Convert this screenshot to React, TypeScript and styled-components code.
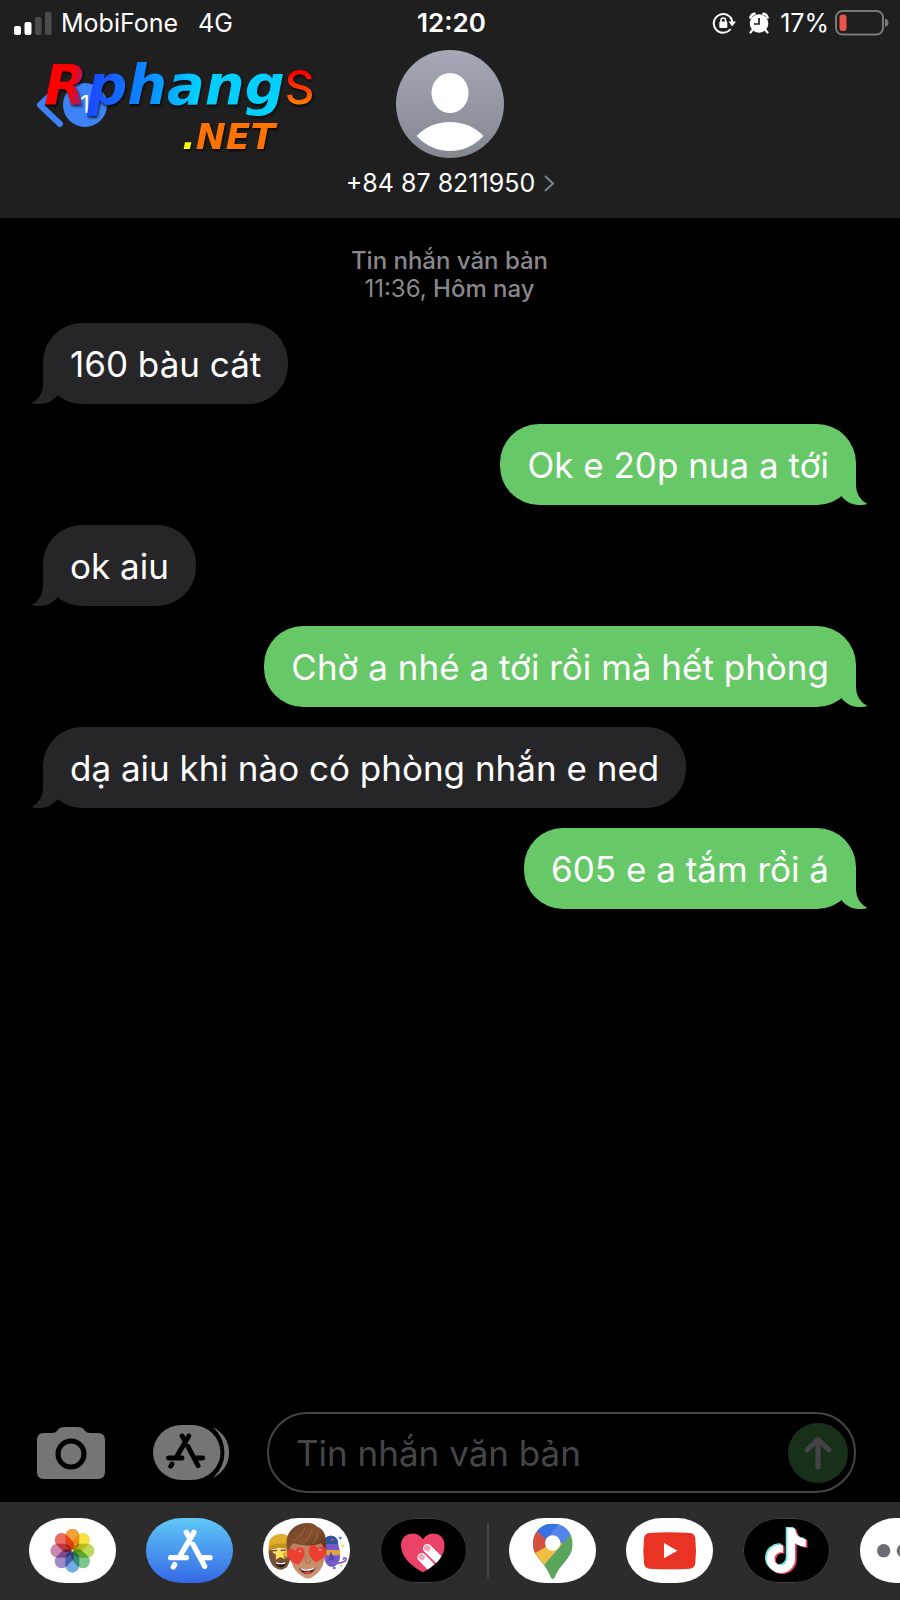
import React from "react";
import styled, { createGlobalStyle } from "styled-components";

const GlobalStyle = createGlobalStyle`
  * { box-sizing: border-box; }
  body {
    margin: 0;
    background: #000;
    color: #fff;
    font-family: Inter, "Noto Sans", sans-serif;
  }
  button {
    padding: 0;
    border: 0;
    background: none;
    color: inherit;
    font: inherit;
    cursor: pointer;
  }
`;

const Screen = styled.div`
  display: flex;
  flex-direction: column;
  min-height: 100vh;
  overflow-x: hidden;
`;

const Header = styled.header`
  position: relative;
  padding-bottom: 20px;
  background: #1f1f1f;
`;

const StatusBar = styled.div`
  display: grid;
  grid-template-columns: 1fr auto 1fr;
  align-items: center;
  height: 46px;
  margin-bottom: 4px;
  padding: 0 11px 0 14px;
  font-size: 25px;
  line-height: 30px;
`;

const StatusGroup = styled.div<{ $end?: boolean }>`
  display: flex;
  align-items: center;
  justify-content: ${(p) => (p.$end ? "flex-end" : "flex-start")};
  gap: ${(p) => (p.$end ? 6 : 9)}px;
`;

const Network = styled.span`
  margin-left: 11px;
`;

const Clock = styled.time`
  font-size: 26px;
  font-weight: 600;
`;

const StatusIcons = styled.span`
  display: flex;
  align-items: center;
  gap: 12px;
  margin-right: 4px;
`;

const NavBar = styled.div`
  display: grid;
  grid-template-columns: 1fr auto 1fr;
  align-items: start;
`;

const BackButton = styled.button`
  display: flex;
  align-items: center;
  width: 80px;
  height: 50px;
  margin: 30px 0 0 36px;
`;

const UnreadBadge = styled.span`
  display: grid;
  place-items: center;
  flex: none;
  width: 44px;
  height: 44px;
  border-radius: 50%;
  background: #3d82f7;
  font-size: 24px;
  line-height: 30px;
`;

const Contact = styled.button`
  display: flex;
  flex-direction: column;
  align-items: center;
  gap: 10px;
`;

const ContactName = styled.span`
  display: flex;
  align-items: center;
  gap: 9px;
  font-size: 25px;
  line-height: 30px;
`;

const Watermark = styled.div`
  position: absolute;
  top: 52px;
  left: 44px;
  display: flex;
  flex-direction: column;
  width: 270px;
  filter: drop-shadow(1px 2px 1px rgba(0, 0, 0, 0.7));
`;

const MarkLine = styled.div<{ $end?: boolean }>`
  display: flex;
  align-items: baseline;
  justify-content: ${(p) => (p.$end ? "flex-end" : "flex-start")};
  height: ${(p) => (p.$end ? 34 : 64)}px;
  padding-right: ${(p) => (p.$end ? 39 : 0)}px;
`;

const MarkText = styled.span<{ $size: number; $fill: string; $upright?: boolean }>`
  padding-right: 4px;
  margin-right: -4px;
  background: ${(p) => p.$fill};
  background-clip: text;
  -webkit-background-clip: text;
  color: transparent;
  font-family: ${(p) => (p.$upright ? "Inter" : '"DejaVu Sans"')}, sans-serif;
  font-size: ${(p) => p.$size}px;
  line-height: ${(p) => (p.$size > 40 ? 66 : 42)}px;
  font-style: ${(p) => (p.$upright ? "normal" : "italic")};
  font-weight: ${(p) => (p.$upright ? 500 : 700)};
`;

const Thread = styled.main`
  display: flex;
  flex: 1;
  flex-direction: column;
  gap: 20px;
  padding: 29px 44px 20px 43px;
`;

const ThreadCaption = styled.p`
  margin: 0;
  color: #89898c;
  font-size: 24px;
  font-weight: 500;
  line-height: 28px;
  text-align: center;
`;

const CaptionTime = styled.span`
  font-weight: 400;
`;

const MessageList = styled.ol`
  display: flex;
  flex-direction: column;
  gap: 20px;
  margin: 0;
  padding: 0;
  list-style: none;
`;

const Bubble = styled.li<{ $sent: boolean }>`
  position: relative;
  align-self: ${(p) => (p.$sent ? "flex-end" : "flex-start")};
  max-width: 85%;
  padding: 19px 27px 18px;
  border-radius: 39px;
  background: ${(p) => (p.$sent ? "#67c867" : "#262628")};
  font-size: 35px;
  line-height: 44px;
`;

const Tail = styled.svg<{ $sent: boolean }>`
  position: absolute;
  bottom: 0;
  ${(p) => (p.$sent ? "right: -12px;" : "left: -12px; transform: scaleX(-1);")}
  fill: ${(p) => (p.$sent ? "#67c867" : "#262628")};
`;

const Composer = styled.form`
  display: flex;
  align-items: center;
  padding: 0 44px 9px 37px;
`;

const ToolButton = styled.button<{ $gap: number }>`
  display: flex;
  flex: none;
  margin-right: ${(p) => p.$gap}px;
`;

const Field = styled.div`
  display: flex;
  flex: 1;
  align-items: center;
  min-width: 0;
  height: 81px;
  padding: 0 6px 0 27px;
  border: 2px solid #454547;
  border-radius: 40px;
`;

const TextInput = styled.input`
  flex: 1;
  min-width: 0;
  height: 60px;
  padding: 0;
  border: 0;
  outline: 0;
  background: transparent;
  color: #fff;
  font-family: inherit;
  font-size: 35px;
  line-height: 44px;
  &::placeholder {
    color: #464648;
    opacity: 1;
  }
`;

const SendButton = styled.button`
  display: grid;
  flex: none;
  place-items: center;
  width: 60px;
  height: 60px;
  border-radius: 50%;
  background: #18301a;
`;

const AppDrawer = styled.nav`
  display: flex;
  align-items: center;
  gap: 20px;
  padding: 16px 0 17px 29px;
  overflow: hidden;
  background: #2c2c2c;
`;

const AppGroup = styled.div`
  display: flex;
  flex: none;
  gap: 30px;
`;

const Divider = styled.span`
  flex: none;
  width: 2px;
  height: 55px;
  background: #434345;
`;

const AppPill = styled.button<{ $fill: string; $outline?: boolean }>`
  flex: none;
  width: 87px;
  height: 65px;
  overflow: hidden;
  border-radius: 36px / 32px;
  background: ${(p) => p.$fill};
  box-shadow: ${(p) => (p.$outline ? "inset 0 0 0 1px #414143" : "none")};
`;

const PillArt = styled.svg`
  display: block;
  width: 87px;
  height: 65px;
  isolation: isolate;
`;

const Petal = styled.rect`
  mix-blend-mode: multiply;
`;

const messages = [
  { text: "160 bàu cát", sent: false },
  { text: "Ok e 20p nua a tới", sent: true },
  { text: "ok aiu", sent: false },
  { text: "Chờ a nhé a tới rồi mà hết phòng", sent: true },
  { text: "dạ aiu khi nào có phòng nhắn e ned", sent: false },
  { text: "605 e a tắm rồi á", sent: true },
];

const Art = ({ children }: { children: React.ReactNode }) => (
  <PillArt viewBox="0 0 261 195" aria-hidden="true">
    {children}
  </PillArt>
);

const StoreStrokes = () => (
  <path d="M121 43L130 59M144 43L101 116M74 119H121M86 140L82 147M141 79L176 145M165 119H192" />
);

const petals = ["#f3a13a", "#f5e23f", "#bdd757", "#7dc690", "#71aee2", "#9c8bc8", "#cb86b2", "#ec6b62"];

const PhotosArt = () => (
  <Art>
    {petals.map((color, i) => (
      <Petal
        key={color}
        x="109"
        y="32"
        width="42"
        height="64"
        rx="21"
        fill={color}
        transform={`rotate(${i * 45} 130 98)`}
      />
    ))}
  </Art>
);

const StoreArt = () => (
  <Art>
    <g fill="none" stroke="#fff" strokeWidth="16" strokeLinecap="round">
      <StoreStrokes />
    </g>
  </Art>
);

const redHeart = "M0 24C-18 12 -24 2 -22 -10C-20 -22 -5 -23 0 -11C5 -23 20 -22 22 -10C24 2 18 12 0 24Z";

const MemojiArt = () => (
  <Art>
    <defs>
      <linearGradient id="skin" x1="0" y1="0" x2="0" y2="1">
        <stop offset="0" stopColor="#b97d5b" />
        <stop offset="1" stopColor="#d09674" />
      </linearGradient>
      <linearGradient id="hair" x1="0" y1="0" x2="1" y2="1">
        <stop offset="0" stopColor="#6f4024" />
        <stop offset="0.5" stopColor="#855030" />
        <stop offset="1" stopColor="#54301a" />
      </linearGradient>
    </defs>
    <path d="M17 96C15 130 30 154 54 155C76 154 84 130 83 94Z" fill="#765037" />
    <path d="M17 88C14 60 34 47 58 48C76 49 86 62 86 88Z" fill="#dcae2c" />
    <path d="M17 86C38 74 64 74 86 84V98C64 88 38 89 17 99Z" fill="#c4921f" />
    <path d="M48 86L54 100L70 98L60 109L67 124L52 117L38 125L39 110L26 101L42 99Z" fill="#ffe15d" />
    <path d="M70 94L76 104L72 120L60 110Z" fill="#e3b53a" />
    <path d="M36 132Q54 138 70 130Q67 148 53 148Q40 147 36 132Z" fill="#2c1712" />
    <path d="M38 132Q54 138 68 131L66 137Q53 141 40 137Z" fill="#fff" />
    <path d="M184 66C192 48 218 50 224 68L230 98C236 128 222 146 206 147C190 145 184 130 182 108Z" fill="#7659c9" />
    <path d="M184 66C192 48 218 50 224 68L224 78H184Z" fill="#28569f" />
    <path d="M186 96H232L230 112H188Z" fill="#dda53d" />
    <path d="M203 100L216 126L196 128Z" fill="#5c44af" />
    <path d="M206 136Q228 138 240 132Q254 126 248 120Q240 118 242 126" fill="none" stroke="#8060c8" strokeWidth="5" />
    <circle cx="208" cy="66" r="4" fill="#d9435a" />
    <circle cx="232" cy="60" r="4" fill="#3b6cf2" />
    <circle cx="239" cy="84" r="4" fill="#f3d448" />
    <circle cx="214" cy="150" r="4" fill="#3b6cf2" />
    <circle cx="235" cy="143" r="3" fill="#ef9a3a" />
    <ellipse cx="80" cy="101" rx="7" ry="15" fill="#a86d4c" />
    <ellipse cx="184" cy="101" rx="7" ry="15" fill="#a86d4c" />
    <path d="M80 66C78 128 88 154 114 172Q134 192 156 172C180 154 190 128 184 66Z" fill="url(#skin)" />
    <path d="M73 96C62 50 88 20 124 16C146 12 158 20 162 26C184 32 194 58 187 98C183 88 180 84 174 76C146 88 112 82 90 76C82 84 80 94 78 102Z" fill="url(#hair)" />
    <path d="M92 70Q112 58 126 30M118 77Q140 62 148 32M148 78Q164 64 164 42" fill="none" stroke="#a06840" strokeWidth="3" />
    <path d="M129 110Q124 132 133 135Q144 135 141 126" fill="none" stroke="#b47552" strokeWidth="4" />
    <path d="M108 150Q133 160 158 146Q152 167 133 168Q114 167 108 150Z" fill="#55201c" />
    <path d="M110 150Q133 160 156 147L152 154Q133 162 116 156Z" fill="#fff" />
    <path d="M122 163Q135 158 146 162Q134 171 122 163Z" fill="#e0594f" />
    <path d={redHeart} fill="#ed3e32" transform="translate(100 113) rotate(-12) scale(1.16)" />
    <path d={redHeart} fill="#ed3e32" transform="translate(162 106) rotate(10) scale(1.16)" />
    <ellipse cx="111" cy="100" rx="5" ry="3" fill="#ff8a7c" />
    <ellipse cx="172" cy="96" rx="5" ry="3" fill="#ff8a7c" />
  </Art>
);

const TouchArt = () => (
  <Art>
    <defs>
      <clipPath id="heartClip">
        <path d="M129 163C100 148 63 120 63 82C63 44 110 34 129 64C148 34 194 44 194 82C194 120 158 148 129 163Z" />
      </clipPath>
    </defs>
    <g clipPath="url(#heartClip)">
      <rect width="261" height="195" fill="#eb426a" />
      <g stroke="#fff" strokeWidth="26" strokeLinecap="round">
        <path d="M142 91L188 136M125 118L166 160" />
      </g>
      <g fill="#f6a3b6">
        <rect x="133" y="80" width="17" height="20" rx="8" transform="rotate(-45 142 90)" />
        <rect x="116" y="107" width="17" height="20" rx="8" transform="rotate(-45 125 117)" />
      </g>
    </g>
  </Art>
);

const MapsArt = () => (
  <Art>
    <defs>
      <clipPath id="pinClip">
        <path d="M131 17C164 17 191 43 191 77C191 104 177 120 163 137C150 152 143 163 138 177Q131 189 125 177C120 163 112 150 100 134C86 117 72 102 72 77C72 43 98 17 131 17Z" />
      </clipPath>
    </defs>
    <g clipPath="url(#pinClip)">
      <rect width="261" height="195" fill="#5aa55c" />
      <path d="M60 195L107 139L191 42V0H60Z" fill="#5484ed" />
      <path d="M60 195L107 139L160 78L131 44L75 100L60 130Z" fill="#f2be42" />
      <path d="M60 20L131 75L79 105L60 120Z" fill="#d75140" />
      <path d="M84 35L131 75L100 82Z" fill="#d75140" />
      <path d="M155 11L111 66L84 38L60 0Z" fill="#3871e0" />
      <path d="M155 11L111 66L131 75L191 42V0Z" fill="#5484ed" />
    </g>
    <circle cx="131" cy="75" r="23" fill="#fff" />
  </Art>
);

const YouTubeArt = () => (
  <Art>
    <path d="M70 45Q131 41 192 45Q207 47 208 62Q212 98 208 135Q207 150 192 152Q131 156 70 152Q55 150 54 135Q50 98 54 62Q55 47 70 45Z" fill="#e93323" />
    <path d="M114 75V121L154 98Z" fill="#fff" />
  </Art>
);

const note =
  "M448 209.9a210 210 0 0 1-122.8-39.2v178.7A162.6 162.6 0 1 1 185 188.3v89.9a74.6 74.6 0 1 0 52.2 71.2V0h88a121 121 0 0 0 1.9 22.2A122 122 0 0 0 381 102.4a121 121 0 0 0 67 20.1z";

const TikTokArt = () => (
  <Art>
    <path d={note} fill="#72e7e6" transform="translate(66 27) scale(0.262)" />
    <path d={note} fill="#e8435f" transform="translate(76 34) scale(0.262)" />
    <path d={note} fill="#fff" transform="translate(71 31) scale(0.262)" />
  </Art>
);

const MoreArt = () => (
  <Art>
    {[71, 130, 189].map((cx) => (
      <circle key={cx} cx={cx} cy="98" r="20" fill="#6c6c74" />
    ))}
  </Art>
);

const SignalIcon = () => (
  <svg width="38" height="24" viewBox="0 0 38 24" aria-hidden="true">
    <rect x="0" y="15" width="7" height="9" rx="2" fill="#fff" />
    <rect x="10.5" y="11" width="7" height="13" rx="2" fill="#fff" />
    <rect x="21" y="6" width="6.5" height="18" rx="2" fill="#4c4c4c" />
    <rect x="31" y="1" width="6.5" height="23" rx="2" fill="#4c4c4c" />
  </svg>
);

const LockIcon = () => (
  <svg width="24" height="24" viewBox="0 0 24 24" aria-hidden="true">
    <path d="M18.5 18A9.3 9.3 0 1 1 20.3 11" fill="none" stroke="#fff" strokeWidth="2" />
    <path d="M16.5 10.5H24L20.2 15.5Z" fill="#fff" />
    <rect x="7.3" y="10.5" width="8" height="6.5" rx="1" fill="#fff" />
    <path d="M9 11V9.2a2.3 2.3 0 0 1 4.6 0V11" fill="none" stroke="#fff" strokeWidth="1.5" />
  </svg>
);

const AlarmIcon = () => (
  <svg width="22" height="24" viewBox="0 0 22 24" aria-hidden="true">
    <circle cx="11" cy="12.5" r="9.3" fill="#fff" />
    <path d="M2.5 6.500A5 5 0 0 1 6.500 2.800M19.500 6.500A5 5 0 0 0 15.500 2.800" fill="none" stroke="#fff" strokeWidth="2.6" strokeLinecap="round" />
    <path d="M4.5 19L2.500 21.500M17.5 19L19.500 21.500" stroke="#fff" strokeWidth="2.2" strokeLinecap="round" />
    <path d="M11 7V13H6" fill="none" stroke="#1f1f1f" strokeWidth="1.7" />
  </svg>
);

const BatteryIcon = () => (
  <svg width="54" height="26" viewBox="0 0 54 26" aria-hidden="true">
    <rect x="1" y="1" width="47" height="23.5" rx="6.5" fill="none" stroke="#7a7a7a" strokeWidth="2" />
    <rect x="4.5" y="4.5" width="7" height="16.5" rx="3" fill="#ea5545" />
    <path d="M50 8.5Q53.5 9.5 53.5 12.7T50 17Z" fill="#7a7a7a" />
  </svg>
);

const AvatarIcon = () => (
  <svg width="108" height="108" viewBox="0 0 108 108" aria-hidden="true">
    <defs>
      <linearGradient id="avatar" x1="0" y1="0" x2="0" y2="1">
        <stop offset="0" stopColor="#a5a9b7" />
        <stop offset="1" stopColor="#838790" />
      </linearGradient>
    </defs>
    <circle cx="54" cy="54" r="54" fill="url(#avatar)" />
    <ellipse cx="54" cy="43" rx="18.5" ry="20" fill="#fff" />
    <path d="M20.5 86Q34 72 54 72T87.500 86Q73 101 54 101T20.500 86Z" fill="#fff" />
  </svg>
);

const CameraIcon = () => (
  <svg width="68" height="53" viewBox="0 0 68 53" aria-hidden="true">
    <path
      d="M7 7H15Q18.500 7 20.500 4.500L21.500 3Q23.500 1 27 1H41Q44.500 1 46.500 3L48 5Q50 7 53 7H61Q68 7 68 14V46Q68 53 61 53H7Q0 53 0 46V14Q0 7 7 7Z"
      fill="#757575"
    />
    <circle cx="34" cy="28" r="13" fill="none" stroke="#000" strokeWidth="5" />
  </svg>
);

const AppsIcon = () => (
  <svg width="76" height="55" viewBox="0 0 76 55" aria-hidden="true">
    <path d="M60 2Q76 11 76 27.500T60 53Q71.500 42 71.500 27.500T60 2Z" fill="#757575" />
    <rect width="67.500" height="55" rx="29" ry="27.500" fill="#757575" />
    <g
      fill="none"
      stroke="#000"
      strokeWidth="17"
      strokeLinecap="round"
      transform="translate(-6 -1.500) scale(0.29)"
    >
      <StoreStrokes />
    </g>
  </svg>
);

export default function App() {
  return (
    <Screen>
      <GlobalStyle />
      <Header>
        <StatusBar>
          <StatusGroup>
            <SignalIcon />
            <span>MobiFone</span>
            <Network>4G</Network>
          </StatusGroup>
          <Clock>12:20</Clock>
          <StatusGroup $end>
            <StatusIcons>
              <LockIcon />
              <AlarmIcon />
            </StatusIcons>
            <span>17%</span>
            <BatteryIcon />
          </StatusGroup>
        </StatusBar>
        <NavBar>
          <BackButton type="button">
            <svg width="27" height="48" viewBox="0 0 27 48" aria-hidden="true">
              <path d="M24 5L4 24L24 43" fill="none" stroke="#3d82f7" strokeWidth="6" strokeLinecap="round" strokeLinejoin="round" />
            </svg>
            <UnreadBadge>1</UnreadBadge>
          </BackButton>
          <Contact type="button">
            <AvatarIcon />
            <ContactName>
              +84 87 8211950
              <svg width="10" height="17" viewBox="0 0 10 17" aria-hidden="true">
                <path d="M1 1L9 8.500L1 16" fill="none" stroke="#7c838d" strokeWidth="2" />
              </svg>
            </ContactName>
          </Contact>
        </NavBar>
        <Watermark>
          <MarkLine>
            <MarkText $size={56} $fill="linear-gradient(100deg, #f00 0 55%, #4a3bd0 95%)">R</MarkText>
            <MarkText $size={56} $fill="linear-gradient(95deg, #1a4cff 5%, #0a90ff 32%, #00cfff 55%)">phang</MarkText>
            <MarkText $size={46} $upright $fill="linear-gradient(#f00 30%, #ff7a00 75%)">S</MarkText>
          </MarkLine>
          <MarkLine $end>
            <MarkText $size={36} $fill="linear-gradient(90deg, #ff0 0 12px, #ff7200 12px)">.NET</MarkText>
          </MarkLine>
        </Watermark>
      </Header>

      <Thread>
        <ThreadCaption>
          Tin nhắn văn bản
          <br />
          <CaptionTime>11:36,</CaptionTime> Hôm nay
        </ThreadCaption>
        <MessageList>
          {messages.map((m) => (
            <Bubble key={m.text} $sent={m.sent}>
              {m.text}
              <Tail $sent={m.sent} width="34" height="44" viewBox="0 0 34 44" aria-hidden="true">
                <path d="M22 4V24Q22 37 33.500 43Q18 47 8 36L2 20Z" />
              </Tail>
            </Bubble>
          ))}
        </MessageList>
      </Thread>

      <Composer onSubmit={(e) => e.preventDefault()}>
        <ToolButton type="button" $gap={48} aria-label="Camera">
          <CameraIcon />
        </ToolButton>
        <ToolButton type="button" $gap={38} aria-label="Apps">
          <AppsIcon />
        </ToolButton>
        <Field>
          <TextInput type="text" placeholder="Tin nhắn văn bản" aria-label="Tin nhắn văn bản" />
          <SendButton type="submit" aria-label="Send">
            <svg width="30" height="34" viewBox="0 0 30 34" aria-hidden="true">
              <path d="M15 31V4M4 14L15 3.500L26 14" fill="none" stroke="#444446" strokeWidth="5" strokeLinecap="round" strokeLinejoin="round" />
            </svg>
          </SendButton>
        </Field>
      </Composer>

      <AppDrawer aria-label="Apps">
        <AppGroup>
          <AppPill type="button" $fill="#fff" aria-label="Photos">
            <PhotosArt />
          </AppPill>
          <AppPill type="button" $fill="linear-gradient(#5fc8f6, #3568e6)" aria-label="App Store">
            <StoreArt />
          </AppPill>
          <AppPill type="button" $fill="#fff" aria-label="Memoji">
            <MemojiArt />
          </AppPill>
          <AppPill type="button" $fill="#000" $outline aria-label="Digital Touch">
            <TouchArt />
          </AppPill>
        </AppGroup>
        <Divider />
        <AppGroup>
          <AppPill type="button" $fill="#fff" aria-label="Google Maps">
            <MapsArt />
          </AppPill>
          <AppPill type="button" $fill="#fff" aria-label="YouTube">
            <YouTubeArt />
          </AppPill>
          <AppPill type="button" $fill="#000" $outline aria-label="TikTok">
            <TikTokArt />
          </AppPill>
          <AppPill type="button" $fill="#fff" aria-label="More">
            <MoreArt />
          </AppPill>
        </AppGroup>
      </AppDrawer>
    </Screen>
  );
}
